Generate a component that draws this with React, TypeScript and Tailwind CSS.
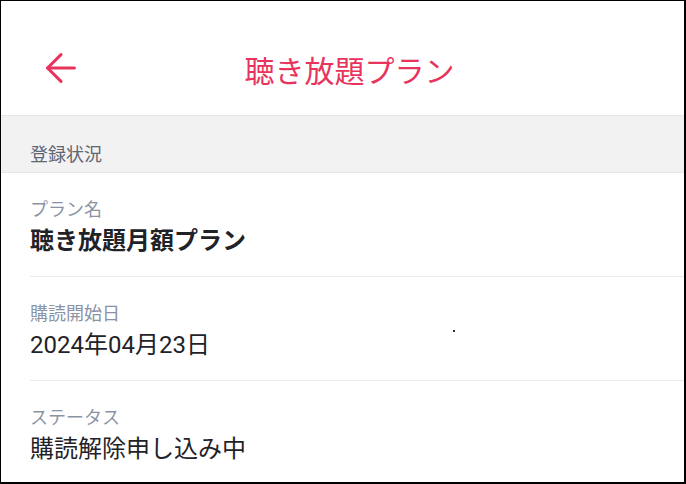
import { ArrowLeft } from 'lucide-react';

const rows = [
  { label: 'プラン名', value: '聴き放題月額プラン', bold: true },
  { label: '購読開始日', value: '2024年04月23日', bold: false },
  { label: 'ステータス', value: '購読解除申し込み中', bold: false },
];

export default function App() {
  return (
    <div className="relative w-[686px] h-[484px] overflow-hidden bg-white border-l border-t border-r-2 border-b-2 border-black font-['Roboto','Noto_Sans_CJK_JP',sans-serif]">
      {/* Header */}
      <div className="flex items-center h-[114px] pt-[20px]">
        <div className="w-[120px] pl-[37px] flex items-center">
          <ArrowLeft size={46} strokeWidth={1.6} className="text-[#e8345c]" />
        </div>
        <h1 className="flex-1 text-center text-[30px] leading-[36px] text-[#e8345c] pt-[8px]">聴き放題プラン</h1>
        <div className="w-[106px]" />
      </div>

      {/* Section title */}
      <div className="h-[58px] border-t border-b border-[#e6e6e6] bg-[#f2f2f2] pl-[29px] pt-[30px]">
        <p className="text-[18px] leading-[18px] text-[#5f6674]">登録状況</p>
      </div>

      {/* Rows */}
      <div className="flex flex-col">
        {rows.map((r) => (
          <div key={r.label} className="ml-[29px] border-b border-[#ebebef] pt-[27px] pb-[22px]">
            <p className="text-[18px] leading-[20px] text-[#8a93a4]">{r.label}</p>
            <p
              className={
                r.bold
                  ? 'mt-[8px] text-[24px] leading-[26px] font-bold text-[#1f2328]'
                  : 'mt-[8px] text-[24px] leading-[26px] text-[#1f2328]'
              }
            >
              {r.value}
            </p>
          </div>
        ))}
      </div>

      <div className="absolute left-[452px] top-[329px] w-[2px] h-[2px] bg-[#333]" />
    </div>
  );
}
